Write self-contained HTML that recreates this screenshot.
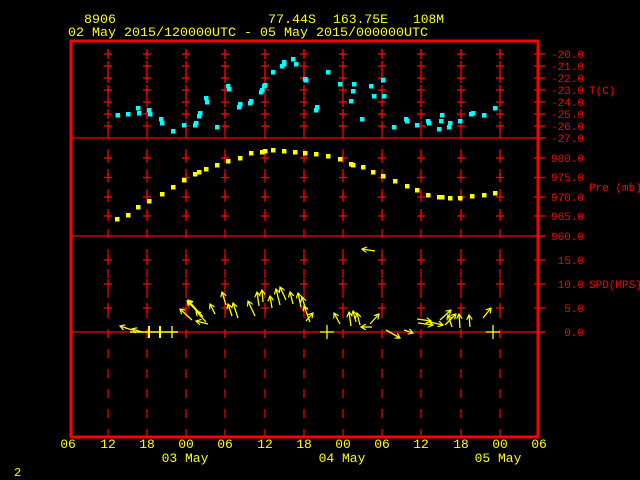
<!DOCTYPE html>
<html><head><meta charset="utf-8"><style>
html,body{margin:0;padding:0;background:#000;}
svg{display:block;}
text{font-family:"Liberation Mono","DejaVu Sans Mono",monospace;}
</style></head><body>
<svg width="640" height="480" viewBox="0 0 640 480" xmlns="http://www.w3.org/2000/svg">
<defs>
<marker id="ah" markerWidth="6" markerHeight="6" refX="5" refY="3" orient="auto" markerUnits="userSpaceOnUse">
<path d="M0,0 L5,3 L0,6" fill="none" stroke="#ff0" stroke-width="1.2"/>
</marker>
</defs>
<rect width="640" height="480" fill="#000"/>
<g fill="#ff0" font-size="13">
<text x="84" y="23" textLength="32" lengthAdjust="spacingAndGlyphs">8906</text>
<text x="268" y="23" textLength="48" lengthAdjust="spacingAndGlyphs">77.44S</text>
<text x="333" y="23" textLength="55" lengthAdjust="spacingAndGlyphs">163.75E</text>
<text x="413" y="23" textLength="31" lengthAdjust="spacingAndGlyphs">108M</text>
<text x="68" y="36" textLength="360" lengthAdjust="spacingAndGlyphs">02 May 2015/120000UTC - 05 May 2015/000000UTC</text>
</g>
<g stroke="#f00" stroke-width="1.2" stroke-dasharray="9 11" stroke-dashoffset="13">
<line x1="108" y1="42" x2="108" y2="436"/><line x1="147" y1="42" x2="147" y2="436"/>
<line x1="186" y1="42" x2="186" y2="436"/><line x1="225" y1="42" x2="225" y2="436"/>
<line x1="265" y1="42" x2="265" y2="436"/><line x1="304" y1="42" x2="304" y2="436"/>
<line x1="343" y1="42" x2="343" y2="436"/><line x1="382" y1="42" x2="382" y2="436"/>
<line x1="421" y1="42" x2="421" y2="436"/><line x1="461" y1="42" x2="461" y2="436"/>
<line x1="500" y1="42" x2="500" y2="436"/>
</g>
<g stroke="#f00" stroke-width="1.3" id="crosses"></g>
<g stroke="#f00" stroke-width="1.3">
<line x1="70" y1="138" x2="545" y2="138"/>
<line x1="70" y1="236" x2="545" y2="236"/>
<line x1="70" y1="332" x2="545" y2="332"/>
</g>
<rect x="71" y="41" width="467" height="396" fill="none" stroke="#f00" stroke-width="3"/>
<g fill="#f00" font-size="11" text-anchor="end">
<text x="584" y="58">-20.0</text><text x="584" y="70">-21.0</text><text x="584" y="82">-22.0</text>
<text x="584" y="94">-23.0</text><text x="584" y="106">-24.0</text><text x="584" y="118">-25.0</text>
<text x="584" y="130">-26.0</text><text x="584" y="142">-27.0</text>
<text x="584" y="162">980.0</text><text x="584" y="181">975.0</text><text x="584" y="201">970.0</text>
<text x="584" y="220">965.0</text><text x="584" y="240">960.0</text>
<text x="584" y="264">15.0</text><text x="584" y="288">10.0</text><text x="584" y="312">5.0</text>
<text x="584" y="336">0.0</text>
</g>
<g fill="#f00" font-size="11">
<text x="589" y="94">T(C)</text>
<text x="589" y="191">Pre (mb)</text>
<text x="589" y="288">SPD(MPS)</text>
</g>
<g fill="#0ff" id="tp"></g>
<g fill="#ff0" id="pp"></g>
<g stroke="#ff0" stroke-width="1.3" fill="none" marker-end="url(#ah)">
<line x1="192" y1="320" x2="180" y2="309"/>
<line x1="203" y1="317" x2="188" y2="300"/>
<line x1="200" y1="314" x2="187" y2="301"/>
<line x1="206" y1="322" x2="196" y2="311"/>
<line x1="208" y1="324" x2="196" y2="321"/>
<line x1="215" y1="314" x2="210" y2="304"/>
<line x1="226" y1="305" x2="222" y2="292"/>
<line x1="232" y1="316" x2="228" y2="304"/>
<line x1="238" y1="318" x2="233" y2="303"/>
<line x1="255" y1="316" x2="248" y2="301"/>
<line x1="259" y1="306" x2="257" y2="292"/>
<line x1="263" y1="302" x2="262" y2="290"/>
<line x1="272" y1="308" x2="270" y2="296"/>
<line x1="280" y1="305" x2="276" y2="289"/>
<line x1="286" y1="300" x2="280" y2="287"/>
<line x1="293" y1="304" x2="290" y2="292"/>
<line x1="301" y1="307" x2="298" y2="293"/>
<line x1="306" y1="310" x2="302" y2="297"/>
<line x1="306" y1="321" x2="313" y2="313"/>
<line x1="310" y1="322" x2="304" y2="306"/>
<line x1="340" y1="324" x2="334" y2="313"/>
<line x1="351" y1="326" x2="349" y2="312"/>
<line x1="356" y1="322" x2="353" y2="311"/>
<line x1="360" y1="325" x2="357" y2="313"/>
<line x1="370" y1="324" x2="379" y2="314"/>
<line x1="372" y1="327" x2="361" y2="327"/>
<line x1="386" y1="330" x2="400" y2="338"/>
<line x1="404" y1="330" x2="413" y2="333"/>
<line x1="417" y1="319" x2="431" y2="321"/>
<line x1="418" y1="323" x2="433" y2="325"/>
<line x1="430" y1="322" x2="443" y2="325"/>
<line x1="440" y1="320" x2="451" y2="310"/>
<line x1="445" y1="325" x2="456" y2="314"/>
<line x1="452" y1="327" x2="448" y2="315"/>
<line x1="460" y1="328" x2="459" y2="314"/>
<line x1="470" y1="327" x2="469" y2="315"/>
<line x1="483" y1="318" x2="491" y2="308"/>
<line x1="375" y1="251" x2="362" y2="249"/>
<line x1="132" y1="330" x2="120" y2="326"/>
<line x1="142" y1="332" x2="132" y2="329"/>
</g>
<g stroke="#ff0" stroke-width="2">
<line x1="130" y1="332" x2="178" y2="332" stroke-width="1.5"/>
<line x1="149" y1="326" x2="149" y2="338"/>
<line x1="160" y1="326" x2="160" y2="338"/>
<line x1="172" y1="326" x2="172" y2="338" stroke-width="1.3"/>
<line x1="320" y1="332" x2="334" y2="332" stroke-width="1.3"/>
<line x1="327" y1="325" x2="327" y2="339" stroke-width="1.3"/>
<line x1="486" y1="332" x2="500" y2="332" stroke-width="1.3"/>
<line x1="493" y1="325" x2="493" y2="339" stroke-width="1.3"/>
</g>
<g fill="#ff0" font-size="13" text-anchor="middle">
<text x="68" y="448">06</text><text x="108" y="448">12</text><text x="147" y="448">18</text>
<text x="186" y="448">00</text><text x="225" y="448">06</text><text x="265" y="448">12</text>
<text x="304" y="448">18</text><text x="343" y="448">00</text><text x="382" y="448">06</text>
<text x="421" y="448">12</text><text x="461" y="448">18</text><text x="500" y="448">00</text>
<text x="539" y="448">06</text>
<text x="185" y="462">03 May</text><text x="342" y="462">04 May</text><text x="498" y="462">05 May</text>
</g>
<text x="14" y="476" fill="#ff0" font-size="12">2</text>
<script>
(function(){
var NS="http://www.w3.org/2000/svg";
var xs=[108,147,186,225,265,304,343,382,421,461,500];
var ys=[54,66,78,90,102,114,126,158,177.5,197,216,260,284,308];
var g=document.getElementById("crosses");
function L(x1,y1,x2,y2){var l=document.createElementNS(NS,"line");l.setAttribute("x1",x1);l.setAttribute("y1",y1);l.setAttribute("x2",x2);l.setAttribute("y2",y2);g.appendChild(l);}
xs.forEach(function(x){ys.forEach(function(y){L(x-4,y,x+4,y);L(x,y-5,x,y+5);});L(x,332,x,338);});
var ry=[54,66,78,90,102,114,126,138,158,177.5,197,216,236,260,284,308,332];
ry.forEach(function(y){L(534,y,545,y);});
var t=[[117.5,115],[128,114],[138,108],[139,113],[149,110],[150,114],[161,119],[162,123],[173,131],[184,125],[195,125],[196,123],[199,116],[200,113],[206,98],[207,102],[217,127],[228,86],[229,89],[239,107],[240,104],[250,103],[251,101],[261,92],[262,90],[264,86],[265,85],[273,72],[282,66],[284,62],[284,64],[293,59],[296,64],[305,79],[306,80],[316,110],[317,107],[328,72],[340,84],[351,101],[353,91],[354,84],[362,119],[371,86],[374,96],[383,80],[384,96],[394,127],[406,119],[407,121],[417,125],[428,121],[429,123],[439,129],[441,121],[442,115],[449,127],[450,123],[460,121],[471,114],[473,113],[484,115],[495,108]];
var p=[[117,219],[128,215],[138,207],[149,201],[162,194],[173,187],[184,180],[195,174],[199,172],[206,169],[217,165],[228,161],[240,158],[251,153],[262,152],[265,151],[273,150],[284,151],[295,152],[305,153],[316,154],[328,156],[340,159],[351,164],[353,165],[363,167],[373,172],[383,176],[395,181],[407,186],[417,190],[428,195],[439,197],[442,197],[450,198],[460,198],[472,196],[484,195],[495,193]];
function R(gid,a){var gg=document.getElementById(gid);a.forEach(function(q){var r=document.createElementNS(NS,"rect");r.setAttribute("x",q[0]-2);r.setAttribute("y",q[1]-2);r.setAttribute("width",4.5);r.setAttribute("height",4.5);gg.appendChild(r);});}
R("tp",t);R("pp",p);
})();
</script>
</svg>
</body></html>
